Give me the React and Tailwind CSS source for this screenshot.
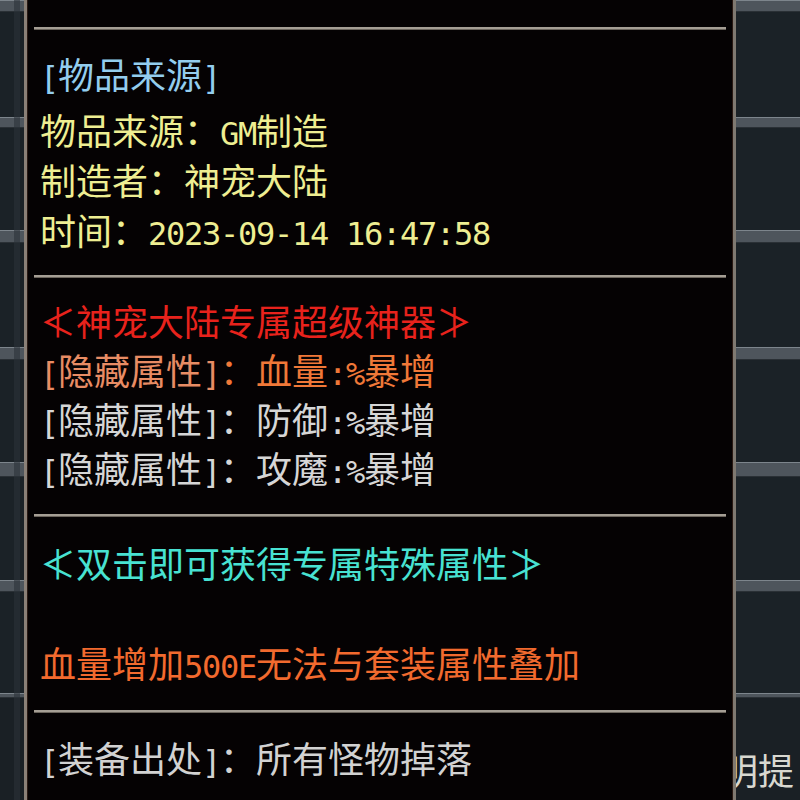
import React from 'react';

const CJK = "font-['Noto_Sans_CJK_SC','Noto_Sans',sans-serif]";

// half-width runs (ascii) get a mono face so they sit on an 18px grid next to 36px ideographs
function Txt({ children }) {
  const parts = children.split(/([\x20-\x7e]+)/).filter(Boolean);
  return parts.map((p, i) =>
    /^[\x20-\x7e]+$/.test(p) ? (
      <span key={i} className="font-['DejaVu_Sans_Mono',monospace] text-[32px] tracking-[-1.26px] whitespace-pre">
        {p}
      </span>
    ) : (
      <span key={i}>{p}</span>
    )
  );
}

function Row({ h = 'h-[50px] leading-[50px]', color, children }) {
  return <div className={`${h} whitespace-nowrap ${color}`}>{children}</div>;
}

function Sep() {
  return (
    <div className="mx-[6px] h-[3px] bg-[#a59e94] border-b border-[#6b645c]" />
  );
}

// stone rail with grey cross bars down the side of the window
function Rail({ children }) {
  const Bar = ({ h }) => (
    <div className={`${h} bg-[#4e555c] border-t border-[#7d858c] border-b border-b-[#2a3035]`} />
  );
  const Cell = ({ h }) => <div className={`${h} bg-[#1b2227]`} />;
  return (
    <div className="flex flex-col h-full">
      <Bar h="h-[12px]" />
      <Cell h="h-[105px]" />
      <Bar h="h-[11px]" />
      <Cell h="h-[102px]" />
      <Bar h="h-[13px]" />
      <Cell h="h-[104px]" />
      <Bar h="h-[13px]" />
      <Cell h="h-[102px]" />
      <Bar h="h-[15px]" />
      <Cell h="h-[103px]" />
      <Bar h="h-[12px]" />
      <Cell h="h-[101px]" />
      <Bar h="h-[5px]" />
      <div className="flex-1 bg-[#1a2025]">{children}</div>
    </div>
  );
}

export default function App() {
  return (
    <div className={`w-[800px] h-[800px] overflow-hidden flex bg-black ${CJK} text-[36px]`}>
      <div className="w-[24px] h-full relative">
        <Rail />
        <div className="absolute top-0 bottom-0 left-[14px] w-[6px] bg-[#2c3238]/60" />
      </div>
      <div className="w-[4px] h-full bg-[#8a8077] border-r border-[#2a1a14]" />

      <div className="flex-1 h-full bg-[#050203] pl-[12px] flex flex-col">
        <div className="h-[27px] -ml-[12px]" />
        <div className="-ml-[12px]"><Sep /></div>
        <div className="h-[18px]" />
        <Row color="text-[#93cdee]"><Txt>[物品来源]</Txt></Row>
        <div className="h-[6px]" />
        <Row color="text-[#eeee92]"><Txt>物品来源：GM制造</Txt></Row>
        <Row color="text-[#eeee92]"><Txt>制造者：神宠大陆</Txt></Row>
        <Row color="text-[#eeee92]"><Txt>时间：2023-09-14 16:47:58</Txt></Row>
        <div className="h-[21px]" />
        <div className="-ml-[12px]"><Sep /></div>

        <div className="h-[18px]" />
        <Row h="h-[49px] leading-[49px]" color="text-[#e8221c]"><Txt>≮神宠大陆专属超级神器≯</Txt></Row>
        <Row h="h-[49px] leading-[49px]" color="text-[#f07838]">
          <span className="text-[#e88c64]"><Txt>[隐藏属性]</Txt></span>
          <Txt>：血量:%暴增</Txt>
        </Row>
        <Row h="h-[49px] leading-[49px]" color="text-[#d6d6d6]"><Txt>[隐藏属性]：防御:%暴增</Txt></Row>
        <Row h="h-[49px] leading-[49px]" color="text-[#d6d6d6]"><Txt>[隐藏属性]：攻魔:%暴增</Txt></Row>
        <div className="h-[22px]" />
        <div className="-ml-[12px]"><Sep /></div>

        <div className="h-[21px]" />
        <Row h="h-[48px] leading-[48px]" color="text-[#48e2d2]"><Txt>≮双击即可获得专属特殊属性≯</Txt></Row>
        <div className="h-[52px]" />
        <Row h="h-[48px] leading-[48px]" color="text-[#f26a2e]"><Txt>血量增加500E无法与套装属性叠加</Txt></Row>
        <div className="h-[24px]" />
        <div className="-ml-[12px]"><Sep /></div>

        <div className="h-[20px]" />
        <Row h="h-[48px] leading-[48px]" color="text-[#d2d2d2]">
          <Txt>[装备出处]：所有怪物掉落</Txt>
        </Row>
      </div>

      <div className="w-[4px] h-full bg-[#7f7971] border-l border-[#2a1a14]" />
      <div className="w-[64px] h-full">
        <Rail>
          <div className="h-[47px]" />
          <div className="overflow-hidden whitespace-nowrap text-[36px] leading-[48px] text-[#d8d8d0]">
            <span className="-ml-[14px]">明提</span>
          </div>
        </Rail>
      </div>
    </div>
  );
}
